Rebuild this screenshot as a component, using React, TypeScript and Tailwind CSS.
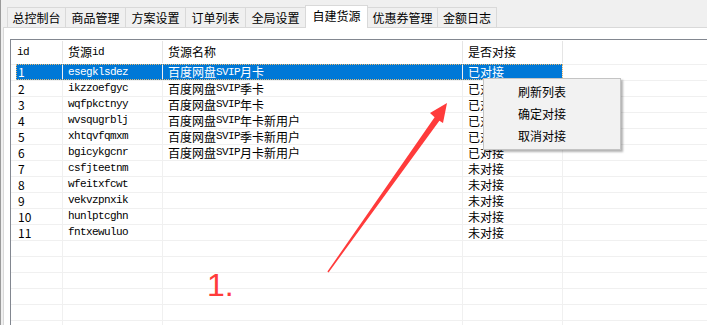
import React from 'react'

const tabs = [
  { label: '总控制台', w: 'w-[59px]' },
  { label: '商品管理', w: 'w-[61px]' },
  { label: '方案设置', w: 'w-[61px]' },
  { label: '订单列表', w: 'w-[61px]' },
  { label: '全局设置', w: 'w-[61px]' },
  { label: '自建货源', w: 'w-[63px]', active: true },
  { label: '优惠券管理', w: 'w-[71px]' },
  { label: '金额日志', w: 'w-[60px]' },
]

const rows = [
  ['1', 'esegklsdez', '百度网盘SVIP月卡', '已对接'],
  ['2', 'ikzzoefgyc', '百度网盘SVIP季卡', '已对接'],
  ['3', 'wqfpkctnyy', '百度网盘SVIP年卡', '已对接'],
  ['4', 'wvsqugrblj', '百度网盘SVIP年卡新用户', '已对接'],
  ['5', 'xhtqvfqmxm', '百度网盘SVIP季卡新用户', '已对接'],
  ['6', 'bgicykgcnr', '百度网盘SVIP月卡新用户', '已对接'],
  ['7', 'csfjteetnm', '', '未对接'],
  ['8', 'wfeitxfcwt', '', '未对接'],
  ['9', 'vekvzpnxik', '', '未对接'],
  ['10', 'hunlptcghn', '', '未对接'],
  ['11', 'fntxewuluo', '', '未对接'],
  ['', '', '', ''],
  ['', '', '', ''],
  ['', '', '', ''],
  ['', '', '', ''],
  ['', '', '', ''],
  ['', '', '', ''],
]

// latin letters look like SimSun's bitmap glyphs, the rest like YaHei
function Txt({ s }: { s: string }) {
  const parts = s.split(/([A-Za-z]+)/).filter(Boolean)
  return (
    <>
      {parts.map((p, i) =>
        /^[A-Za-z]+$/.test(p) ? (
          <span key={i} className="font-['Liberation_Mono',monospace] text-[11px] tracking-[-0.6px]">
            {p}
          </span>
        ) : (
          <span key={i}>{p}</span>
        )
      )}
    </>
  )
}

export default function App() {
  return (
    <div className="relative w-[707px] h-[325px] overflow-hidden bg-[#f0f0f0] border-l border-[#9a9a9a] flex flex-col font-['Noto_Sans_CJK_SC',sans-serif] text-[12px] text-black">
      {/* tab strip */}
      <div className="flex items-end h-[27px] pl-[6px] shrink-0">
        {tabs.map((t, i) => (
          <div
            key={t.label}
            className={`${t.w} ${i > 0 ? '-ml-px' : ''} flex items-center justify-center border-t border-l border-r border-[#d9d9d9] leading-none ${
              t.active ? 'relative z-10 h-[23px] -mb-px bg-white pb-[2px]' : 'h-[20px] bg-[#f0f0f0]'
            }`}
          >
            {t.label}
          </div>
        ))}
      </div>

      {/* tab page */}
      <div className="flex-1 ml-[2px] border-l border-t border-[#d9d9d9] bg-white pt-[11px] pl-[6px]">
        <div className="h-full border-l border-t border-[#828790] bg-white">
          {/* header */}
          <div className="flex h-[24px] items-center">
            <div className="w-[52px] h-[22px] border-r border-[#e5e5e5] pl-[6px] flex items-center">
              <Txt s="id" />
            </div>
            <div className="w-[100px] h-[22px] border-r border-[#e5e5e5] pl-[5px] flex items-center">
              <Txt s="货源id" />
            </div>
            <div className="w-[300px] h-[22px] border-r border-[#e5e5e5] pl-[5px] flex items-center">
              货源名称
            </div>
            <div className="w-[100px] h-[22px] border-r border-[#e5e5e5] pl-[5px] flex items-center">
              是否对接
            </div>
          </div>

          {/* rows */}
          {rows.map((r, i) => {
            const sel = i === 0
            return (
              <div key={i} className="flex h-[16px] border-t border-[#f0f0f0] pl-[5px]">
                <div
                  className={`flex ${
                    sel
                      ? '-mt-px h-[16px] bg-[#0078d7] text-white outline-1 outline-dotted outline-[#e8b870] -outline-offset-1'
                      : 'h-[15px]'
                  }`}
                >
                  <div className="w-[47px] border-r border-[#f0f0f0] pl-[2px] flex items-center leading-none">
                    {r[0]}
                  </div>
                  <div className="w-[100px] border-r border-[#f0f0f0] pl-[5px] flex items-center leading-none">
                    <Txt s={r[1]} />
                  </div>
                  <div className="w-[300px] border-r border-[#f0f0f0] pl-[5px] flex items-center leading-none">
                    <Txt s={r[2]} />
                  </div>
                  <div className="w-[100px] border-r border-[#f0f0f0] pl-[5px] flex items-center leading-none">
                    {r[3]}
                  </div>
                </div>
              </div>
            )
          })}
        </div>
      </div>

      {/* context menu */}
      <div className="absolute left-[482px] top-[78px] w-[138px] h-[72px] bg-[#f2f2f2] border border-[#c4c4c4] shadow-[2px_2px_2px_rgba(0,0,0,0.3)] py-[2px]">
        {['刷新列表', '确定对接', '取消对接'].map(m => (
          <div key={m} className="h-[22px] pl-[34px] flex items-center leading-none">
            {m}
          </div>
        ))}
      </div>

      {/* annotation arrow */}
      <svg className="absolute left-0 top-0 pointer-events-none" width="707" height="325" viewBox="0 0 707 325">
        <polygon
          fill="#ff3b3b"
          points="326.4,271.6 433.6,117.3 429,113 446,103 442,123 438.4,120.7 327.6,272.4"
        />
      </svg>
      <span className="absolute left-[206px] top-[269px] font-['Liberation_Sans',sans-serif] text-[32px] leading-[32px] text-[#ff3b3b]">
        1.
      </span>
    </div>
  )
}
